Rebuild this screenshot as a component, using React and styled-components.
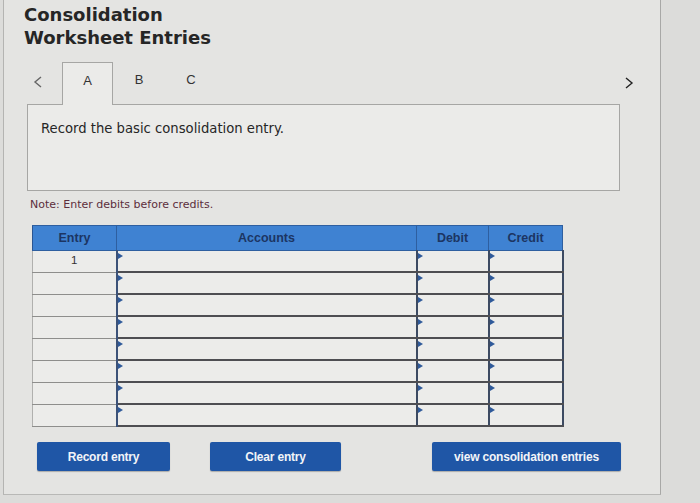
import React from "react";
import styled, { createGlobalStyle } from "styled-components";

const GlobalStyle = createGlobalStyle`
    html, body {
        margin: 0;
        padding: 0;
        background: #dcdcda;
        width: 700px;
        height: 503px;
        overflow: hidden;
    }
`;

const Panel = styled.div`
    box-sizing: border-box;
    margin-left: 3px;
    width: 658px;
    height: 495px;
    background: #e4e4e2;
    border-left: 1px solid #b4b4b2;
    border-right: 1px solid #a8a8a6;
    border-bottom: 1px solid #b8b8b6;
    padding: 3px 0 0 20px;
    font-family: "DejaVu Sans", Verdana, sans-serif;
`;

const Title = styled.h1`
    margin: 0;
    font-family: "DejaVu Sans", Verdana, sans-serif;
    font-size: 18px;
    line-height: 23px;
    font-weight: bold;
    color: #262626;
`;

const TabBar = styled.div`
    display: flex;
    align-items: flex-end;
    margin-top: 13px;
    height: 42px;
    width: 600px;
    position: relative;
`;

const Chevron = styled.svg`
    width: 10px;
    height: 12px;
    color: ${(p) => p.$color};
`;

const PrevSlot = styled.div`
    width: 38px;
    align-self: flex-start;
    padding: 11px 0 0 9px;
    box-sizing: border-box;
`;

const NextSlot = styled.div`
    position: absolute;
    right: -10px;
    top: 12px;
`;

const Tab = styled.div`
    box-sizing: border-box;
    width: ${(p) => (p.$active ? "51px" : "52px")};
    height: ${(p) => (p.$active ? "43px" : "42px")};
    margin-bottom: ${(p) => (p.$active ? "-1px" : "0")};
    padding-bottom: 7px;
    display: flex;
    align-items: center;
    justify-content: center;
    font-family: "Liberation Sans", Arial, sans-serif;
    font-size: 13px;
    color: #333;
    background: ${(p) => (p.$active ? "#ebebe9" : "transparent")};
    border: ${(p) => (p.$active ? "1px solid #a6a6a4" : "none")};
    border-bottom: none;
    position: relative;
    z-index: 2;
`;

const Prompt = styled.div`
    box-sizing: border-box;
    margin-left: 3px;
    width: 593px;
    height: 87px;
    background: #ebebe9;
    border: 1px solid #a6a6a4;
    padding: 16px 0 0 13px;
    font-size: 13.2px;
    color: #262626;
`;

const Note = styled.div`
    margin: 7px 0 0 6px;
    font-size: 11px;
    color: #5c2e3c;
`;

const Table = styled.table`
    margin: 14px 0 0 8px;
    border-collapse: collapse;
    width: 526px;
    table-layout: fixed;
    font-family: "Liberation Sans", Arial, sans-serif;
`;

const Th = styled.th`
    height: 24px;
    width: ${(p) => p.$w}px;
    background: #3f82d2;
    color: #1c3563;
    font-size: 12.5px;
    font-weight: bold;
    border: 1px solid #2e5fa0;
    border-left: 1px solid #2a5592;
    padding: 0;
`;

const EntryCell = styled.td`
    height: 20px;
    background: #ececea;
    border-left: 1px solid #b0b0ae;
    border-bottom: 1px solid #8e8e8c;
    border-right: 2px solid #3c5278;
    text-align: center;
    font-size: 11.5px;
    color: #333;
    padding: 0;
    vertical-align: top;
    line-height: 18px;
`;

const InputCell = styled.td`
    height: 20px;
    background: #ececea;
    border-bottom: 2px solid #4e4e52;
    border-right: 2px solid #3c4a62;
    padding: 0;
    position: relative;

    &::before {
        content: "";
        position: absolute;
        left: 0;
        top: 2px;
        border-top: 3px solid transparent;
        border-bottom: 3px solid transparent;
        border-left: 5px solid #2f5a9a;
    }
`;

const Buttons = styled.div`
    display: flex;
    margin: 15px 0 0 13px;
`;

const Button = styled.button`
    box-sizing: border-box;
    width: ${(p) => p.$w}px;
    height: 29px;
    margin-right: ${(p) => p.$gap}px;
    background: #1f56a6;
    color: #f2f4f8;
    border: none;
    border-radius: 2px;
    font-family: "Liberation Sans", Arial, sans-serif;
    font-size: 12px;
    font-weight: bold;
    letter-spacing: -0.2px;
    box-shadow: 0 1px 1px rgba(0, 0, 0, 0.25);
`;

const rows = Array.from({ length: 8 }, (_, i) => i);

function ChevronIcon({ dir, color }) {
    const d = dir === "left" ? "M8 1 L2 6 L8 11" : "M2 1 L8 6 L2 11";
    return (
        <Chevron viewBox="0 0 10 12" $color={color}>
            <path d={d} fill="none" stroke="currentColor" strokeWidth="1.4" />
        </Chevron>
    );
}

export default function App() {
    return (
        <>
            <GlobalStyle />
            <Panel>
                <Title>
                    Consolidation
                    <br />
                    Worksheet Entries
                </Title>
                <TabBar>
                    <PrevSlot>
                        <ChevronIcon dir="left" color="#666" />
                    </PrevSlot>
                    <Tab $active>A</Tab>
                    <Tab>B</Tab>
                    <Tab>C</Tab>
                    <NextSlot>
                        <ChevronIcon dir="right" color="#222" />
                    </NextSlot>
                </TabBar>
                <Prompt>Record the basic consolidation entry.</Prompt>
                <Note>Note: Enter debits before credits.</Note>
                <Table>
                    <thead>
                        <tr>
                            <Th $w={83}>Entry</Th>
                            <Th $w={299}>Accounts</Th>
                            <Th $w={71}>Debit</Th>
                            <Th $w={73}>Credit</Th>
                        </tr>
                    </thead>
                    <tbody>
                        {rows.map((i) => (
                            <tr key={i}>
                                <EntryCell>{i === 0 ? "1" : ""}</EntryCell>
                                <InputCell />
                                <InputCell />
                                <InputCell />
                            </tr>
                        ))}
                    </tbody>
                </Table>
                <Buttons>
                    <Button $w={133} $gap={40}>Record entry</Button>
                    <Button $w={131} $gap={91}>Clear entry</Button>
                    <Button $w={189} $gap={0}>view consolidation entries</Button>
                </Buttons>
            </Panel>
        </>
    );
}
